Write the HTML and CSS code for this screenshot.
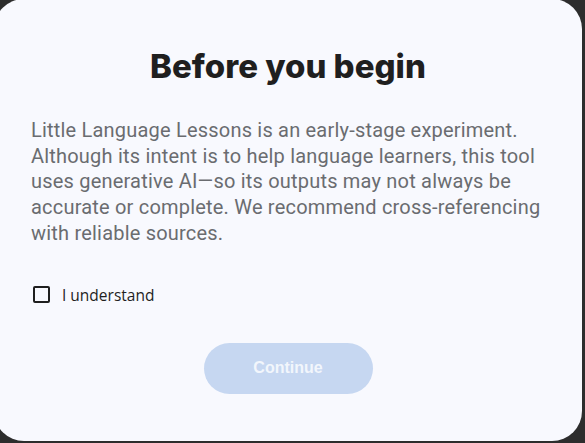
FILE: index.html
```html
<!DOCTYPE html>
<html lang="en">
<head>
  <meta charset="UTF-8">
  <title>Before you begin</title>
  <link rel="stylesheet" href="styles.css">
</head>
<body>

<div class="dialog">
  <h2 class="title">Before you begin</h2>

  <p class="notice">Little Language Lessons is an early-stage experiment. Although its intent is to help language learners, this tool uses generative AI—so its outputs may not always be accurate or complete. We recommend cross-referencing with reliable sources.</p>

  <label class="agree">
    <span class="box"></span>
    I understand
  </label>

  <div class="actions">
    <button class="continue" disabled>Continue</button>
  </div>
</div>

</body>
</html>
```

FILE: styles.css
```css
body {
  margin: 0;
  background: #2d2d2d;
  overflow: hidden;
  font-family: "Open Sans", "Liberation Sans", sans-serif;
}
.dialog {
  box-sizing: border-box;
  width: 588px;
  height: 442px;
  margin: -1px 0 0 -6px;
  padding: 44px 37px 0 37px;
  background: #f8f9fe;
  border-radius: 30px;
}
.title {
  margin: 0;
  text-align: center;
  font-family: Inter, sans-serif;
  font-weight: 800;
  font-size: 33px;
  line-height: 46px;
  color: #1f1f1f;
}
.notice {
  margin: 29px 0 0 0;
  font-family: Roboto, sans-serif;
  font-size: 20px;
  letter-spacing: 0.2px;
  line-height: 25.7px;
  color: #6a6c70;
}
.agree {
  display: flex;
  align-items: center;
  gap: 12px;
  margin: 37px 0 0 2px;
  font-size: 15.5px;
  color: #1f1f1f;
}
.box {
  box-sizing: border-box;
  width: 17px;
  height: 17px;
  border: 2px solid #1f1f1f;
  border-radius: 2px;
}
.actions {
  display: flex;
  justify-content: center;
  margin-top: 37px;
}
.continue {
  width: 169px;
  height: 51px;
  border: none;
  border-radius: 26px;
  background: #c6d7f1;
  color: #f2f6fc;
  font-family: "Liberation Sans", Arial, sans-serif;
  font-weight: bold;
  font-size: 16px;
}
```
